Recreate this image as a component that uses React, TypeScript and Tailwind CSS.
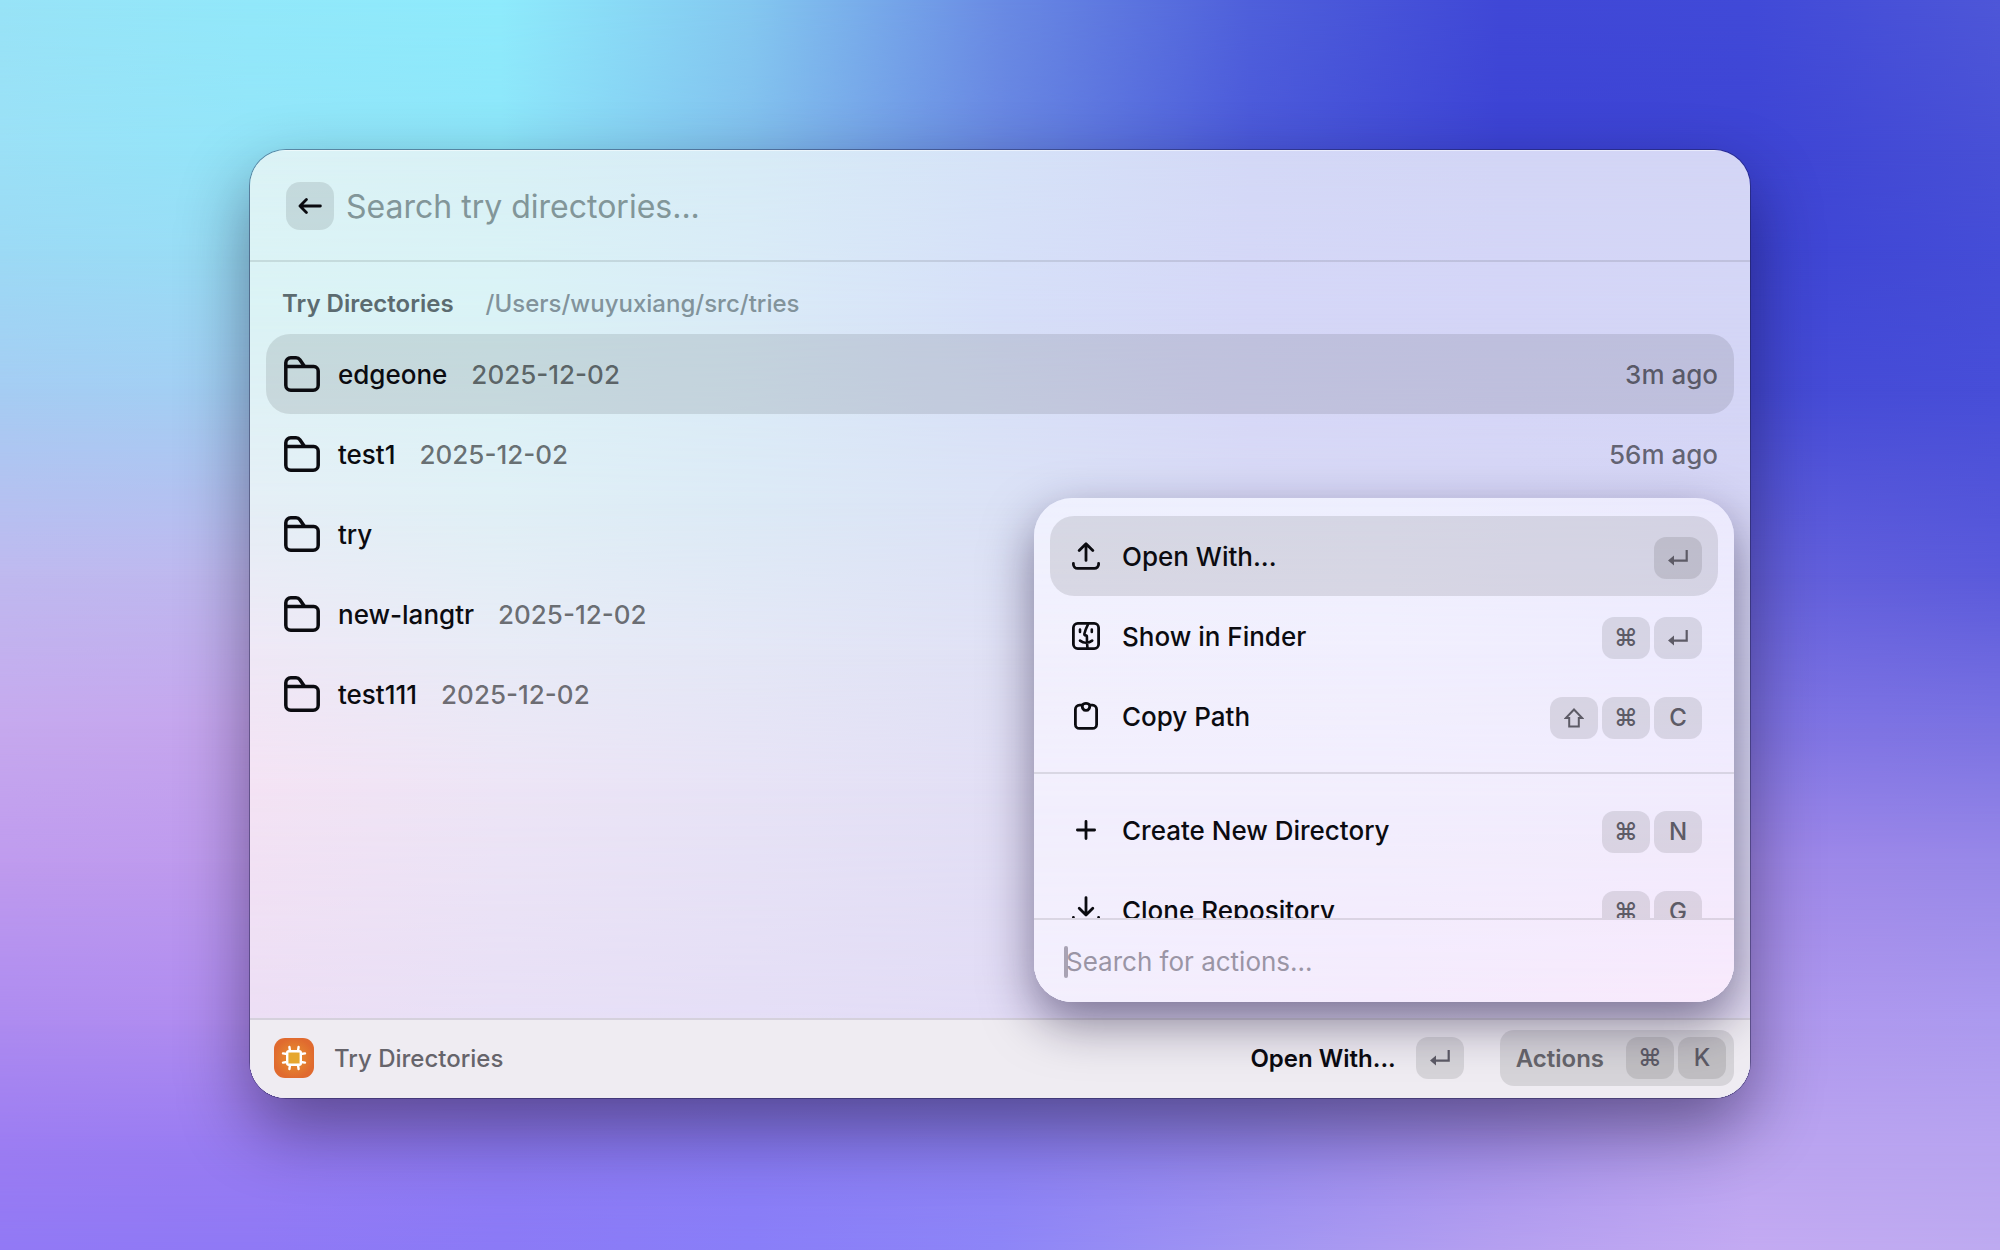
import { useId } from "react";
import type { ReactNode } from "react";

// Colour grid, spread evenly from left to right; `y` is the share of the height in percent
type MeshRow = { y: number; colors: string[] };

const wallpaper: MeshRow[] = [
  { y: 0, colors: ["#98e3f7", "#92e8fa", "#8eebfc", "#84c8f0", "#6a8be4", "#4f60db", "#4048d7", "#414ad8", "#4e57d8"] },
  { y: 12, colors: ["#9be0f6", "#93e5f9", "#8de6fa", "#82c0ee", "#6887e2", "#4b59da", "#3c43d4", "#3d44d4", "#4850d6"] },
  { y: 20, colors: ["#9cdaf5", "#98def6", "#8fdcf5", "#84bbec", "#6a84e0", "#4b56d8", "#3a41d1", "#3d44d4", "#454dd7"] },
  { y: 31, colors: ["#a5cdf3", "#a2d0f4", "#9ccbf2", "#90b4ec", "#7486e1", "#5259d8", "#3f44d0", "#444ad6", "#474ed8"] },
  { y: 46, colors: ["#bfb9ef", "#beb8ef", "#b8b0ed", "#a89fe8", "#8580e1", "#6c66d9", "#5f58d4", "#6561dc", "#5a5adb"] },
  { y: 58, colors: ["#c6a9ee", "#c5a5ee", "#b8a0ec", "#a894e9", "#9286e3", "#8278dd", "#7a70da", "#8074e4", "#7a72e2"] },
  { y: 69, colors: ["#bf9bee", "#be9aee", "#b295ec", "#a48dea", "#9686e6", "#8f80e2", "#9280e0", "#a088e9", "#9888e8"] },
  { y: 82, colors: ["#ad8bf0", "#b08cf0", "#a585f0", "#9a84f0", "#9385ee", "#9484e8", "#9f88e6", "#b098ee", "#ac9aef"] },
  { y: 92, colors: ["#9b7cf2", "#977bf2", "#8d7af3", "#8a7cf5", "#8c80f3", "#9688ee", "#a792ec", "#bba4f0", "#b8a4f0"] },
  { y: 100, colors: ["#9179f5", "#8f79f5", "#8b7af6", "#897ef8", "#8d85f7", "#a195f2", "#b5a0f0", "#c3aaf2", "#bdaaf0"] },
];

const glass: MeshRow[] = [
  { y: 0, colors: ["#dcf3f6", "#d9f1f6", "#d8ecf7", "#d6e3f8", "#d4d9f7", "#d3d6f6", "#d4d6f6"] },
  { y: 17, colors: ["#dbf3f5", "#daf3f6", "#daebf7", "#d6dff8", "#d5d7f7", "#d4d5f7", "#d4d6f6"] },
  { y: 37, colors: ["#e5eff6", "#e0f0f6", "#dceaf6", "#dbe2f6", "#d8d9f6", "#d6d6f6", "#d5d5f5"] },
  { y: 53, colors: ["#efe8f6", "#e8ebf6", "#e4e7f6", "#e0e1f5", "#dedcf5", "#dadaf5", "#d9d9f5"] },
  { y: 67, colors: ["#f4e3f4", "#ede5f6", "#e7e3f6", "#e2dff5", "#e0dcf5", "#dddaf5", "#dbdaf4"] },
  { y: 100, colors: ["#eaddf5", "#e6def6", "#e4ddf6", "#e2dbf6", "#e2daf5", "#e4dbf3", "#e6def3"] },
];

const menuGlass: MeshRow[] = [
  { y: 0, colors: ["#eff1fe", "#eeeffe", "#eceafd"] },
  { y: 30, colors: ["#f2f0fd", "#f1effe", "#eeebfe"] },
  { y: 60, colors: ["#f2effd", "#f2eefd", "#f1ebfd"] },
  { y: 100, colors: ["#f3effd", "#f4ebfd", "#f8e9fc"] },
];

// Bilinear mesh: each row fades in over the one above it
function Mesh({ rows }: { rows: MeshRow[] }) {
  const id = useId();
  return (
    <svg className="absolute inset-0 h-full w-full" viewBox="0 0 100 100" preserveAspectRatio="none" aria-hidden="true">
      {rows.map((row, i) => {
        const top = i === 0 ? 0 : rows[i - 1].y;
        return (
          <g key={row.y}>
            <linearGradient id={`${id}c${i}`}>
              {row.colors.map((color, n) => (
                <stop key={n} offset={n / (row.colors.length - 1)} stopColor={color} />
              ))}
            </linearGradient>
            <linearGradient id={`${id}f${i}`} gradientUnits="userSpaceOnUse" x1="0" x2="0" y1={top} y2={row.y}>
              <stop offset="0" stopColor="#fff" stopOpacity={i === 0 ? 1 : 0} />
              <stop offset="1" stopColor="#fff" />
            </linearGradient>
            <mask id={`${id}m${i}`} style={{ maskType: "alpha" }} maskUnits="userSpaceOnUse" x="0" y="0" width="100" height="100">
              <rect y={top} width="100" height={100 - top} fill={`url(#${id}f${i})`} />
            </mask>
            <rect width="100" height="100" fill={`url(#${id}c${i})`} mask={`url(#${id}m${i})`} />
          </g>
        );
      })}
    </svg>
  );
}

function Icon({ children }: { children: ReactNode }) {
  return (
    <svg
      className="size-7 shrink-0"
      viewBox="0 0 28 28"
      fill="none"
      stroke="currentColor"
      strokeWidth="2.8"
      strokeLinecap="round"
      strokeLinejoin="round"
      aria-hidden="true"
    >
      {children}
    </svg>
  );
}

function FolderIcon() {
  return (
    <svg className="size-9 shrink-0" viewBox="0 0 36 36" fill="none" stroke="currentColor" strokeWidth="3.5" strokeLinejoin="round" aria-hidden="true">
      <path d="M1.8 10.6V6.8a5 5 0 0 1 5-5H12c1.6 0 3 .7 3.9 2l4.6 6.800" />
      <path d="M1.800 10.600h28a4.400 4.400 0 0 1 4.400 4.400v14.200a5 5 0 0 1-5 5H6.800a5 5 0 0 1-5-5z" />
    </svg>
  );
}

function ReturnGlyph() {
  return (
    <svg className="h-4 w-5" viewBox="0 0 20 16" fill="none" aria-hidden="true">
      <path d="M18.7 0v10.6H5" stroke="currentColor" strokeWidth="2.2" />
      <path d="M0 10.6l6-5v10z" fill="currentColor" />
    </svg>
  );
}

function ShiftGlyph() {
  return (
    <svg className="size-5" viewBox="0 0 20 20" fill="none" aria-hidden="true">
      <path d="M10 1.5 18.2 10h-3.400v8.500H5.200V10H1.800z" stroke="currentColor" strokeWidth="2" />
    </svg>
  );
}

function keyCap(key: string) {
  if (key === "↵") return <ReturnGlyph />;
  if (key === "⇧") return <ShiftGlyph />;
  return key;
}

function Keys({ keys }: { keys: string[] }) {
  return (
    <span className="flex gap-1">
      {keys.map((key) => (
        <kbd
          key={key}
          className="flex h-[42px] w-12 items-center justify-center rounded-xl bg-black/10 text-2xl font-medium text-[#5d5b66] [font-family:Inter,sans-serif]"
        >
          {keyCap(key)}
        </kbd>
      ))}
    </span>
  );
}

const directories = [
  { name: "edgeone", date: "2025-12-02", opened: "3m ago" },
  { name: "test1", date: "2025-12-02", opened: "56m ago" },
  { name: "try" },
  { name: "new-langtr", date: "2025-12-02" },
  { name: "test111", date: "2025-12-02" },
];

type Action = { title: string; keys: string[]; icon: ReactNode };

const tray = <path d="M1.4 21.4v.8a4.2 4.2 0 0 0 4.2 4.2h16.8a4.2 4.2 0 0 0 4.2-4.2v-.8" />;

const openActions: Action[] = [
  {
    title: "Open With...",
    keys: ["↵"],
    icon: (
      <Icon>
        <path d="M14 18.4V2M7.2 8.6 14 1.8l6.8 6.8" />
        {tray}
      </Icon>
    ),
  },
  {
    title: "Show in Finder",
    keys: ["⌘", "↵"],
    icon: (
      <Icon>
        <rect x="1.4" y="1.4" width="25.2" height="25.2" rx="4.4" />
        <path
          strokeWidth="2.6"
          d="M8 7.6v2.4M19.8 7.6v2.4M16 2.4c-1.6 3.2-3 6.4-3.6 9.4-.2 1 .2 1.6 1.2 1.6.9 0 1.3.5 1.3 1.4 0 4 .1 8 .6 11.4M8 18.6c3.6 2.8 8.6 2.8 12.2 0"
        />
      </Icon>
    ),
  },
  {
    title: "Copy Path",
    keys: ["⇧", "⌘", "C"],
    icon: (
      <Icon>
        <path d="M9.8 3.2H7.4a4 4 0 0 0-4 4v15.2a4 4 0 0 0 4 4h13.2a4 4 0 0 0 4-4V7.2a4 4 0 0 0-4-4h-2.4" />
        <path d="M10.4 3.2C11 1.8 12 1.4 14 1.4s3 .4 3.6 1.8c.5 2.8-1 5.2-3.6 5.2s-4.1-2.4-3.6-5.2z" />
      </Icon>
    ),
  },
];

const createActions: Action[] = [
  {
    title: "Create New Directory",
    keys: ["⌘", "N"],
    icon: (
      <Icon>
        <path d="M14 5.4v17.2M5.4 14h17.2" />
      </Icon>
    ),
  },
  {
    title: "Clone Repository",
    keys: ["⌘", "G"],
    icon: (
      <Icon>
        <path d="M14 1.6v17M7.2 12.2l6.8 6.8 6.8-6.8" />
        {tray}
      </Icon>
    ),
  },
];

function ActionList({ actions, selected }: { actions: Action[]; selected?: string }) {
  return (
    <ul className="px-4">
      {actions.map((action) => (
        <li key={action.title}>
          <button
            type="button"
            className={`flex h-20 w-full items-center gap-[22px] rounded-3xl pr-4 pl-[22px] text-left font-medium ${
              action.title === selected ? "bg-black/10" : ""
            }`}
          >
            {action.icon}
            <span className="flex-1 pt-0.5">{action.title}</span>
            <span className="pt-1">
              <Keys keys={action.keys} />
            </span>
          </button>
        </li>
      ))}
    </ul>
  );
}

function ActionMenu() {
  return (
    <section
      aria-label="Actions"
      className="absolute right-4 bottom-24 w-[700px] rounded-[38px] shadow-[0_20px_50px_rgba(20,10,50,0.5)]"
    >
      <div className="relative overflow-hidden rounded-[38px]">
        <Mesh rows={menuGlass} />
        <div className="relative">
          <div className="h-[422px] overflow-hidden border-b-2 border-black/10 pt-[18px]">
            <ActionList actions={openActions} selected="Open With..." />
            <hr className="my-4 border-t-2 border-black/10" />
            <ActionList actions={createActions} />
          </div>
          <div className="flex h-[82px] items-center pt-0.5 pr-6 pl-[30px]">
            <span className="h-8 w-1 rounded-full bg-[#a9a3b4]" />
            <input
              type="text"
              aria-label="Search for actions"
              placeholder="Search for actions..."
              className="-ml-0.5 flex-1 bg-transparent outline-none placeholder:text-[#9a95a5]"
            />
          </div>
        </div>
      </div>
    </section>
  );
}

function AppIcon() {
  return (
    <svg className="size-10" viewBox="0 0 40 40" aria-hidden="true">
      <defs>
        <radialGradient id="app-icon">
          <stop offset="0" stopColor="#e8952d" />
          <stop offset="1" stopColor="#e06a2f" />
        </radialGradient>
      </defs>
      <rect width="40" height="40" rx="11" fill="url(#app-icon)" />
      <rect x="13.2" y="13.2" width="13.6" height="13.6" rx="1.5" fill="#e6a72f" stroke="#fff" strokeWidth="2.4" />
      <path
        d="M16 13l-.6-4M24 13l.6-4M16 27l-.6 4M24 27l.6 4M13 16l-4-.6M13 24l-4 .6M27 16l4-.6M27 24l4 .6"
        stroke="#fff"
        strokeWidth="2.4"
        strokeLinecap="round"
      />
    </svg>
  );
}

export default function App() {
  return (
    <div className="relative isolate min-h-screen overflow-hidden pt-[150px] pb-36 text-[26px] leading-8 text-[#0b0b10] [font-family:Inter,sans-serif]">
      <div className="absolute inset-0 -z-10">
        <Mesh rows={wallpaper} />
      </div>

      <main className="mx-auto w-3/4 rounded-[36px] shadow-[0_0_0_1px_rgba(20,20,60,0.4),0_30px_70px_rgba(10,5,30,0.46)]">
        <div className="relative overflow-hidden rounded-[36px]">
          <Mesh rows={glass} />

          <div className="relative">
            <header className="flex h-28 items-center gap-3 border-t border-b-2 border-t-white/50 border-b-black/10 px-9">
              <button type="button" aria-label="Back" className="flex size-12 items-center justify-center rounded-[14px] bg-black/10">
                <svg
                  className="h-4 w-6"
                  viewBox="0 0 24 16"
                  fill="none"
                  stroke="currentColor"
                  strokeWidth="2.8"
                  strokeLinecap="round"
                  strokeLinejoin="round"
                  aria-hidden="true"
                >
                  <path d="M22.4 8H2M8.4 1.6 2 8l6.4 6.4" />
                </svg>
              </button>
              <input
                type="text"
                aria-label="Search try directories"
                placeholder="Search try directories..."
                className="flex-1 bg-transparent pt-0.5 text-[32px] leading-10 outline-none placeholder:text-[#829699]"
              />
            </header>

            <div className="min-h-[756px] px-4">
              <div className="flex h-[72px] items-center gap-8 px-4 pt-3 text-2xl">
                <h2 className="font-semibold text-[#5c6b70]">Try Directories</h2>
                <span className="font-medium text-[#82939b]">/Users/wuyuxiang/src/tries</span>
              </div>
              <ul>
                {directories.map((dir, i) => (
                  <li key={dir.name}>
                    <button
                      type="button"
                      className={`flex h-20 w-full items-center gap-[18px] rounded-3xl pr-4 pl-[18px] font-medium ${i === 0 ? "bg-black/10" : ""}`}
                    >
                      <FolderIcon />
                      <span className="flex gap-6 pt-0.5">
                        <span>{dir.name}</span>
                        <span className="text-black/55">{dir.date}</span>
                      </span>
                      <span className="ml-auto pt-0.5 text-black/55">{dir.opened}</span>
                    </button>
                  </li>
                ))}
              </ul>
            </div>

            <footer className="flex h-20 items-center border-t-2 border-[#d5d1dc] bg-[#efecf2] pr-4 pb-0.5 pl-6 text-2xl">
              <AppIcon />
              <span className="ml-5 pt-0.5 font-medium text-[#66646b]">Try Directories</span>
              <button type="button" className="ml-auto flex items-center gap-5 font-semibold">
                <span className="pt-0.5">Open With...</span>
                <Keys keys={["↵"]} />
              </button>
              <button
                type="button"
                className="ml-9 flex h-14 items-center gap-[22px] rounded-[14px] bg-black/10 pr-2 pl-4 font-semibold text-[#66656b]"
              >
                <span className="pt-0.5">Actions</span>
                <Keys keys={["⌘", "K"]} />
              </button>
            </footer>
          </div>

          <ActionMenu />
        </div>
      </main>
    </div>
  );
}
